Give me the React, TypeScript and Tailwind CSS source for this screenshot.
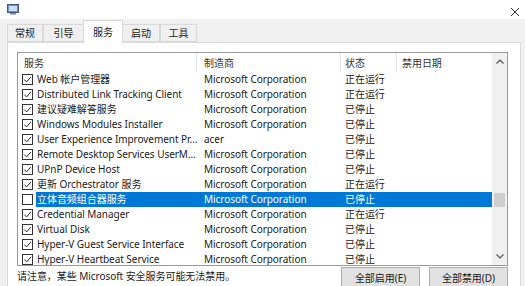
import React from "react";

const rows: { name: string; maker: string; status: string; checked: boolean; selected?: boolean }[] = [
  { name: "Web 帐户管理器", maker: "Microsoft Corporation", status: "正在运行", checked: true },
  { name: "Distributed Link Tracking Client", maker: "Microsoft Corporation", status: "正在运行", checked: true },
  { name: "建议疑难解答服务", maker: "Microsoft Corporation", status: "已停止", checked: true },
  { name: "Windows Modules Installer", maker: "Microsoft Corporation", status: "已停止", checked: true },
  { name: "User Experience Improvement Pr...", maker: "acer", status: "已停止", checked: true },
  { name: "Remote Desktop Services UserM...", maker: "Microsoft Corporation", status: "已停止", checked: true },
  { name: "UPnP Device Host", maker: "Microsoft Corporation", status: "已停止", checked: true },
  { name: "更新 Orchestrator 服务", maker: "Microsoft Corporation", status: "正在运行", checked: true },
  { name: "立体音频组合器服务", maker: "Microsoft Corporation", status: "已停止", checked: false, selected: true },
  { name: "Credential Manager", maker: "Microsoft Corporation", status: "正在运行", checked: true },
  { name: "Virtual Disk", maker: "Microsoft Corporation", status: "已停止", checked: true },
  { name: "Hyper-V Guest Service Interface", maker: "Microsoft Corporation", status: "已停止", checked: true },
  { name: "Hyper-V Heartbeat Service", maker: "Microsoft Corporation", status: "已停止", checked: true },
];

function Box({ checked }: { checked: boolean }) {
  return (
    <div className="w-[11px] h-[11px] border border-[#333] bg-white flex items-center justify-center shrink-0">
      {checked && (
        <svg width="9" height="9" viewBox="0 0 9 9">
          <path d="M1.3 4.6 L3.6 6.9 L7.8 2.1" stroke="#222" strokeWidth="1" fill="none" />
        </svg>
      )}
    </div>
  );
}

export default function App() {
  const tabs = ["常规", "引导", "服务", "启动", "工具"];
  return (
    <div
      className="w-[525px] h-[286px] bg-[#f0f0f0] overflow-hidden text-[10px] tracking-[-0.05px] text-[#1a1a1a] leading-none"
      style={{ fontFamily: '"Noto Sans", "Noto Sans CJK SC", sans-serif' }}
    >
      {/* title bar */}
      <div className="h-[19px] bg-white flex items-center justify-between pl-[7px] pr-[5px]">
        <svg width="12" height="11" viewBox="0 0 12 11">
          <rect x="0.5" y="0.5" width="11" height="8" fill="#6b8fc4" stroke="#3c5a8a" />
          <rect x="2" y="2" width="8" height="5" fill="#cfe0f5" />
          <rect x="3" y="9" width="6" height="1.5" fill="#7a8aa0" />
        </svg>
        <svg width="10" height="10" viewBox="0 0 10 10" className="mt-[4px]">
          <path d="M1 1 L9 9 M9 1 L1 9" stroke="#333" strokeWidth="1" />
        </svg>
      </div>
      {/* tabs */}
      <div className="flex items-end h-[23px] pl-[7px]">
        {tabs.map((t, i) =>
          i === 2 ? (
            <div
              key={t}
              className="h-[23px] w-[40px] -mb-[1px] bg-white border border-[#d9d9d9] border-b-0 flex items-start justify-center pt-[6px] z-10 relative"
            >
              {t}
            </div>
          ) : (
            <div
              key={t}
              className={`h-[18px] ${i === 0 ? "w-[36px]" : i === 1 ? "w-[40px]" : "w-[37px]"} bg-[#f0f0f0] border border-[#d9d9d9] ${i === 1 ? "border-r-0" : ""} ${i === 3 ? "border-l-0" : ""} flex items-center justify-center`}
            >
              {t}
            </div>
          )
        )}
      </div>
      {/* panel */}
      <div className="ml-[7px] w-[514px] h-[250px] bg-white border border-[#d9d9d9] pt-[9px] pl-[9px]">
        <div className="w-[491px] h-[214px] border border-[#9a9a9a] flex overflow-hidden">
          <div className="flex-1 flex flex-col overflow-hidden">
            {/* header */}
            <div className="h-[19px] shrink-0 flex items-center text-[#333]">
              <div className="w-[179px] pl-[6px] h-full flex items-center border-r border-[#e5e5e5]">服务</div>
              <div className="w-[144px] pl-[7px] h-full flex items-center border-r border-[#e5e5e5]">制造商</div>
              <div className="w-[56px] pl-[4px] h-full flex items-center border-r border-[#e5e5e5]">状态</div>
              <div className="flex-1 pl-[5px] h-full flex items-center">禁用日期</div>
            </div>
            {rows.map((r) => (
              <div key={r.name} className="h-[15px] shrink-0 flex items-center">
                <div className="w-[18px] pl-[4px] shrink-0 h-full flex items-center">
                  <Box checked={r.checked} />
                </div>
                <div
                  className={`flex-1 h-full flex items-center ${r.selected ? "bg-[#0078d7] text-white" : ""}`}
                >
                  <div className="w-[168px] pl-[1px] whitespace-nowrap overflow-hidden leading-[15px]">{r.name}</div>
                  <div className="w-[141px] whitespace-nowrap leading-[15px]">{r.maker}</div>
                  <div className="flex-1 whitespace-nowrap leading-[15px]">{r.status}</div>
                </div>
              </div>
            ))}
          </div>
          {/* scrollbar */}
          <div className="w-[15px] bg-[#f0f0f0] flex flex-col items-center justify-between shrink-0">
            <div className="h-[17px] flex items-center justify-center">
              <svg width="8" height="5" viewBox="0 0 8 5">
                <path d="M0.5 4.5 L4 1 L7.5 4.5" stroke="#555" strokeWidth="1.2" fill="none" />
              </svg>
            </div>
            <div className="flex-1 w-full flex flex-col pt-[123px]">
              <div className="h-[14px] w-[11px] mx-auto bg-[#cdcdcd]" />
            </div>
            <div className="h-[17px] flex items-center justify-center">
              <svg width="8" height="5" viewBox="0 0 8 5">
                <path d="M0.5 0.5 L4 4 L7.5 0.5" stroke="#555" strokeWidth="1.2" fill="none" />
              </svg>
            </div>
          </div>
        </div>
        <div className="flex items-start justify-between w-[491px] mt-[1px]">
          <div className="pt-[4px] text-[#222]">请注意，某些 Microsoft 安全服务可能无法禁用。</div>
          <div className="flex gap-[9px]">
            <div className="w-[79px] h-[22px] bg-[#e1e1e1] border border-[#adadad] flex items-center justify-center">全部启用(E)</div>
            <div className="w-[79px] h-[22px] bg-[#e1e1e1] border border-[#adadad] flex items-center justify-center">全部禁用(D)</div>
          </div>
        </div>
      </div>
    </div>
  );
}
